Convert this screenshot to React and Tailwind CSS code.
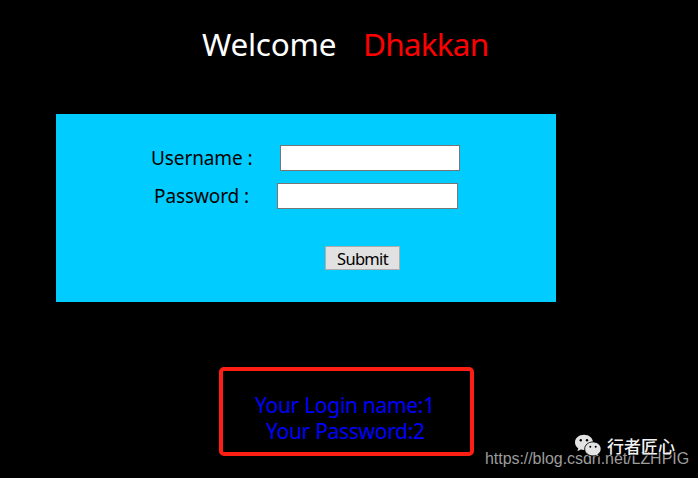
function WeChatIcon() {
  return (
    <svg width="28" height="24" viewBox="0 0 28 24" className="shrink-0">
      <path
        d="M10 0.8C5 0.8 1 4.100 1 8.400c0 2.400 1.300 4.400 3.300 5.800L3.400 17.300l3.400-1.800c1 .3 2.100.5 3.200.5 5 0 9-3.400 9-7.600S15 .8 10 .8z"
        fill="#e3e3e3"
      />
      <circle cx="6.800" cy="6.200" r="1.200" fill="#000" />
      <circle cx="13" cy="6.200" r="1.200" fill="#000" />
      <path
        d="M19 7.900c-4.600 0-8.300 3.100-8.300 7s3.700 7 8.300 7c1 0 1.900-.1 2.700-.4l2.900 1.500-.7-2.600c2-1.300 3.200-3.300 3.200-5.500 0-3.900-3.500-7-8.100-7z"
        fill="#e3e3e3"
        stroke="#000"
        strokeWidth="0.9"
      />
      <circle cx="16.300" cy="12.800" r="1" fill="#000" />
      <circle cx="21.700" cy="12.800" r="1" fill="#000" />
    </svg>
  );
}

export default function App() {
  return (
    <div className="relative h-[478px] w-[698px] overflow-hidden bg-black font-['Noto_Sans','Open_Sans',sans-serif]">
      <h1 className="flex pt-6 pl-[202px] text-[31.5px] leading-10 whitespace-nowrap">
        <span className="w-[161px] tracking-[-0.25px] text-white">Welcome</span>
        <span className="tracking-[-0.8px] text-[#ff0000]">Dhakkan</span>
      </h1>

      <form
        className="mt-[50px] ml-14 h-[188px] w-[500px] bg-[#00ccff] pt-[31px] text-[19px] leading-[26px] text-black"
        onSubmit={(e) => e.preventDefault()}
      >
        <label className="flex pl-[95px]">
          <span className="w-[129px] tracking-[-0.1px] whitespace-nowrap">Username :</span>
          <input type="text" className="h-[26px] w-[180px] border border-[#767676] bg-white outline-none" />
        </label>
        <label className="mt-3 flex pl-[98px]">
          <span className="w-[123px] tracking-[-0.1px] whitespace-nowrap">Password :</span>
          <input type="password" className="h-[26px] w-[181px] border border-[#767676] bg-white outline-none" />
        </label>
        <button
          type="submit"
          className="mt-[37px] ml-[269px] flex h-6 w-[75px] justify-center border border-[#adadad] bg-[#e1e1e1] pt-px text-[16.500px] leading-[22px] tracking-[-0.7px] whitespace-nowrap"
        >
          Submit
        </button>
      </form>

      <div className="mt-[65px] ml-[219px] h-[89px] w-[255px] rounded-[5px] border-4 border-[#ff1e14] pt-[21px] text-[21px] leading-[26px] tracking-[-0.3px] whitespace-nowrap text-[#0000ff]">
        <p className="pl-8">Your Login name:1</p>
        <p className="pl-[43px]">Your Password:2</p>
      </div>

      <p className="absolute top-[449px] left-[485px] font-['Liberation_Sans',Arial,sans-serif] text-[16px] leading-5 tracking-[-0.05px] whitespace-nowrap text-[#9c9c9c]">
        https://blog.csdn.net/LZHPIG
      </p>
      <div className="absolute top-[434px] left-[574px] flex items-center gap-[5px] whitespace-nowrap">
        <WeChatIcon />
        <span className="font-['Noto_Sans_CJK_SC',sans-serif] text-[17px] leading-6 font-medium text-[#f2f2f2] [text-shadow:1px_1px_1px_#000]">
          行者匠心
        </span>
      </div>
    </div>
  );
}
